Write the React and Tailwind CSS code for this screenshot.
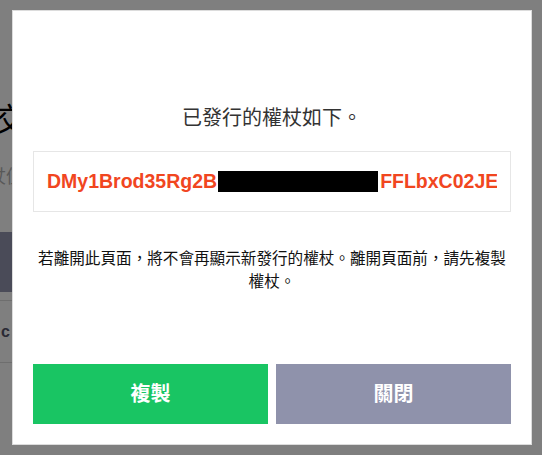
import React from 'react';

const cjk = { fontFamily: '"Liberation Sans", "Noto Sans CJK TC", sans-serif' };

const TokenDialog = () => {
    return (
        <div className="w-[520px] h-[435px] ml-[2px] bg-white border border-[#dcdcdc] flex flex-col px-5 pt-[93px] pb-5">
            {/* Title */}
            <h2 className="text-center text-[20px] leading-[28px] text-[#333333] font-normal">已發行的權杖如下。</h2>

            {/* Token box */}
            <div className="mt-[19px] h-[61px] border border-[#e6e6e6] flex items-center px-[13px]">
                <div className="flex-1 min-w-0 overflow-hidden">
                    <div className="whitespace-nowrap flex items-center text-[19.5px] font-bold text-[#f1461f]" style={{ fontFamily: '"Liberation Sans", Arial, sans-serif' }}>
                        <span className="shrink-0">DMy1Brod35Rg2B</span>
                        <span className="shrink-0 inline-block w-[160px] h-[21px] bg-black ml-[1px] mr-[2px]" />
                        <span className="shrink-0">FFLbxC02JEIk7wQp</span>
                    </div>
                </div>
            </div>

            {/* Notice */}
            <p className="mt-[35px] text-center text-[15.6px] leading-[23px] text-[#111111]">
                若離開此頁面，將不會再顯示新發行的權杖。離開頁面前，請先複製權杖。
            </p>

            {/* Actions */}
            <div className="mt-auto flex gap-2">
                <button type="button" className="flex-1 h-[60px] bg-[#19c563] text-white text-[20px] font-bold">複製</button>
                <button type="button" className="flex-1 h-[60px] bg-[#8f92ab] text-white text-[20px] font-bold">關閉</button>
            </div>
        </div>
    );
};

const App = () => {
    return (
        <div className="relative w-full h-screen overflow-hidden bg-white" style={cjk}>
            {/* Page underneath, only its right edge peeks out on the left */}
            <div className="w-[12px] overflow-hidden flex flex-col">
                <div className="h-[102px]" />
                <div className="flex justify-end h-[36px] items-center">
                    <span className="shrink-0 text-[32px] leading-[36px] text-black whitespace-nowrap mr-[-14px]">設定交</span>
                </div>
                <div className="h-[28px]" />
                <div className="flex justify-end h-[22px] items-center">
                    <span className="shrink-0 text-[18px] text-[#b0b0b0] whitespace-nowrap mr-[-12px]">權杖值</span>
                </div>
                <div className="h-[44px]" />
                <div className="h-[60px] bg-[#9597b1]" />
                <div className="h-[8px]" />
                <div className="h-px bg-[#dcdcdc]" />
                <div className="flex justify-end h-[61px] items-center">
                    <span className="shrink-0 text-[16px] font-bold text-[#54546a] whitespace-nowrap mr-[2px]">c</span>
                </div>
                <div className="h-px bg-[#dcdcdc]" />
            </div>

            {/* Overlay + dialog */}
            <div className="absolute inset-0 bg-black/50 flex items-center justify-center">
                <TokenDialog />
            </div>
        </div>
    );
};

export default App;
